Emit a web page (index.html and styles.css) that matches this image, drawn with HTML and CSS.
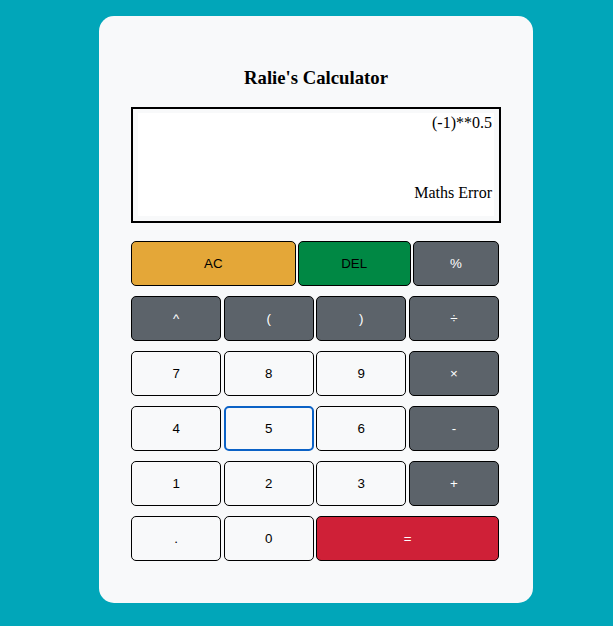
FILE: index.html
```html
<!DOCTYPE html>
<html lang="en">
<head>
<meta charset="utf-8">
<title>Ralie's Calculator</title>
<link rel="stylesheet" href="styles.css">
</head>
<body>
<div class="page">
  <div class="card">
    <h3 class="title">Ralie's Calculator</h3>
    <div class="display">
      <div class="screen">
        <div class="expr">(-1)**0.5</div>
        <div class="result">Maths Error</div>
      </div>
    </div>
    <div class="keys">
      <div class="row-top">
        <button class="key key-ac">AC</button>
        <button class="key key-del">DEL</button>
        <button class="key key-op">%</button>
      </div>
      <div class="grid">
        <button class="key key-op">^</button>
        <button class="key key-op">(</button>
        <button class="key key-op">)</button>
        <button class="key key-op">÷</button>
        <button class="key">7</button>
        <button class="key">8</button>
        <button class="key">9</button>
        <button class="key key-op">×</button>
        <button class="key">4</button>
        <button class="key key-focus">5</button>
        <button class="key">6</button>
        <button class="key key-op">-</button>
        <button class="key">1</button>
        <button class="key">2</button>
        <button class="key">3</button>
        <button class="key key-op">+</button>
        <button class="key">.</button>
        <button class="key">0</button>
        <button class="key key-eq">=</button>
      </div>
    </div>
  </div>
</div>
</body>
</html>
```
FILE: styles.css
```css
html, body {
  margin: 0;
  padding: 0;
  background: #01a6b9;
}
body {
  height: 626px;
  overflow: hidden;
}
.page {
  padding: 16px 0 0 99px;
}
.card {
  width: 434px;
  box-sizing: border-box;
  background: #f8f9fa;
  border-radius: 15px;
  padding: 32px 32px 42px 32px;
}
.title {
  margin: 18.72px 0;
  font-family: "Liberation Serif", "Times New Roman", serif;
  font-size: 18.72px;
  font-weight: bold;
  text-align: center;
  color: #000;
  line-height: 21.5px;
}
.display {
  width: 370px;
  box-sizing: border-box;
  border: 2px solid #000;
  padding: 4px 5px 5px 5px;
  background: #f8f9fa;
}
.screen {
  background: #fff;
  height: 103px;
  box-sizing: border-box;
  padding: 1px 2px 0 2px;
  display: flex;
  flex-direction: column;
  font-family: "Liberation Serif", "Times New Roman", serif;
  font-size: 16px;
  line-height: 18.4px;
  text-align: right;
  color: #000;
}
.result {
  margin-top: auto;
  margin-bottom: 14px;
}
.keys {
  margin-top: 18px;
  width: 368px;
  display: flex;
  flex-direction: column;
  gap: 10px;
}
.row-top {
  display: grid;
  grid-template-columns: 164.7px 113px 86.3px;
  column-gap: 2px;
}
.grid {
  display: grid;
  grid-template-columns: repeat(4, 1fr);
  column-gap: 2.33px;
  row-gap: 10px;
}
.key {
  height: 45px;
  box-sizing: border-box;
  margin: 0;
  padding: 0;
  border: 1px solid #000;
  border-radius: 5px;
  background: #f8f9fa;
  color: #000;
  font-family: "Liberation Sans", Arial, sans-serif;
  font-size: 13.33px;
  line-height: 1;
  text-align: center;
}
.key-op {
  background: #5c636a;
  color: #fff;
}
.key-ac {
  background: #e4a738;
}
.key-del {
  background: #008844;
  color: #000;
}
.key-eq {
  background: #cf2037;
  color: #fff;
  grid-column: span 2;
}
.key-focus {
  border: 2px solid #0b62c6;
}
```
